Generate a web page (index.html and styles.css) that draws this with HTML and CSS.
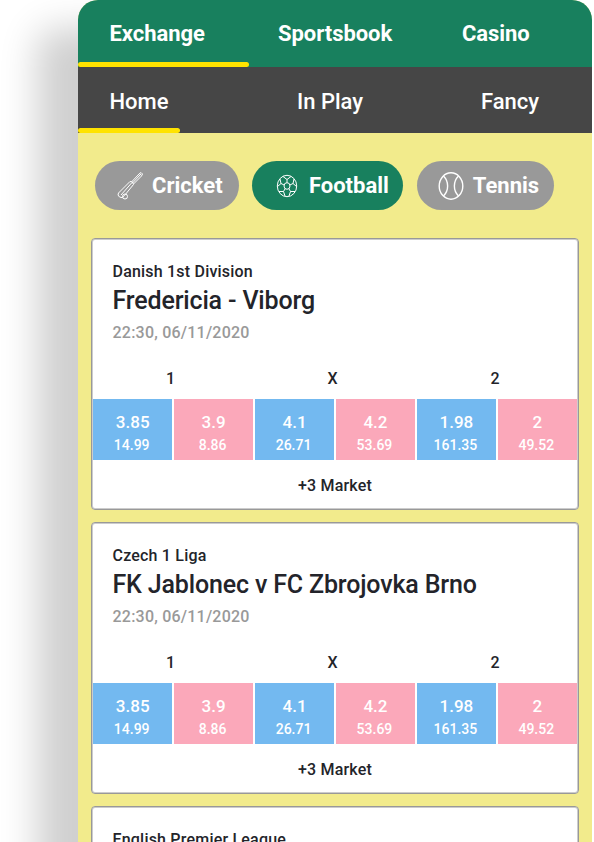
FILE: index.html
```html
<!DOCTYPE html>
<html lang="en">

<head>
    <meta charset="UTF-8">
    <meta name="viewport" content="width=device-width, initial-scale=1.0">
    <title>Exchange</title>
    <link rel="stylesheet" href="styles.css">
</head>

<body>
    <main class="phone">
        <nav class="tabs tabs-main">
            <a class="active">Exchange</a>
            <a>Sportsbook</a>
            <a>Casino</a>
        </nav>
        <nav class="tabs tabs-sub">
            <a class="active">Home</a>
            <a>In Play</a>
            <a>Fancy</a>
        </nav>

        <!-- Sports filter -->
        <div class="sports">
            <button class="sport cricket">
                <svg width="28" height="30" viewBox="0 0 28 30">
                    <path d="M2.500 22L14 10.500Q17 10 17.500 13.500L8.500 24.500Q6 28 3.500 26Q1 24 2.500 22Z M5 24L16 11.500 M15.500 11L23 3L25 1.500L26.500 3L25.500 5L17.500 13 M16.500 12L25 3" />
                    <circle cx="9" cy="25.500" r="2.500" />
                </svg>
                <span>Cricket</span>
            </button>
            <button class="sport football active">
                <svg width="22" height="24" viewBox="0 0 22 24">
                    <ellipse cx="11" cy="12" rx="9.700" ry="10.700" />
                    <ellipse cx="11" cy="12" rx="3" ry="3.300" />
                    <path d="M11 8.700V5.500L7 2.500 M11 5.500L15 2.500 M13.800 11L17 9.500L18 5 M17 9.500L20.500 12.500 M12.800 14.600L14.500 17.500L19 17.500 M14.500 17.500L13 22 M9.200 14.600L7.500 17.500L3 17.500 M7.500 17.500L9 22 M8.200 11L5 9.500L4 5 M5 9.500L1.500 12.500" />
                </svg>
                <span>Football</span>
            </button>
            <button class="sport tennis">
                <svg width="26" height="28" viewBox="0 0 26 28">
                    <ellipse cx="13" cy="14" rx="11.800" ry="13.200" />
                    <path d="M5.500 4C11 9.500 11 18.500 5.500 24 M20.500 4C15 9.500 15 18.500 20.500 24" />
                </svg>
                <span>Tennis</span>
            </button>
        </div>

        <!-- Matches -->
        <div class="matches">
            <section class="card">
                <h3 class="league">Danish 1st Division</h3>
                <h2 class="teams">Fredericia - Viborg</h2>
                <p class="date">22:30, 06/11/2020</p>
                <div class="outcomes"><span>1</span><span>X</span><span>2</span></div>
                <div class="odds">
                    <div class="back"><b>3.85</b><small>14.99</small></div>
                    <div class="lay"><b>3.9</b><small>8.86</small></div>
                    <div class="back"><b>4.1</b><small>26.71</small></div>
                    <div class="lay"><b>4.2</b><small>53.69</small></div>
                    <div class="back"><b>1.98</b><small>161.35</small></div>
                    <div class="lay"><b>2</b><small>49.52</small></div>
                </div>
                <a class="more">+3 Market</a>
            </section>

            <section class="card">
                <h3 class="league">Czech 1 Liga</h3>
                <h2 class="teams">FK Jablonec v FC Zbrojovka Brno</h2>
                <p class="date">22:30, 06/11/2020</p>
                <div class="outcomes"><span>1</span><span>X</span><span>2</span></div>
                <div class="odds">
                    <div class="back"><b>3.85</b><small>14.99</small></div>
                    <div class="lay"><b>3.9</b><small>8.86</small></div>
                    <div class="back"><b>4.1</b><small>26.71</small></div>
                    <div class="lay"><b>4.2</b><small>53.69</small></div>
                    <div class="back"><b>1.98</b><small>161.35</small></div>
                    <div class="lay"><b>2</b><small>49.52</small></div>
                </div>
                <a class="more">+3 Market</a>
            </section>

            <section class="card">
                <h3 class="league">English Premier League</h3>
            </section>
        </div>
    </main>
</body>

</html>
```
FILE: styles.css
```css
* {
    box-sizing: border-box;
}

body {
    margin: 0;
    height: 842px;
    overflow: hidden;
    background-color: #fff;
    font-family: Roboto, sans-serif;
    font-weight: 500;
    color: #23242a;
}

.phone {
    width: 514px;
    height: 900px;
    margin-left: 78px;
    border-radius: 20px 20px 0 0;
    background-color: #f2eb8c;
    box-shadow: -41px 28px 37px rgba(0, 0, 0, 0.19);
    overflow: hidden;
}

/* Navigation */
.tabs {
    display: grid;
    height: 67px;
    color: #fff;
    font-size: 22px;
    line-height: 67px;
}

.tabs a {
    white-space: nowrap;
}

.tabs .active {
    padding-left: 31.5px;
}

.tabs .active::after {
    content: "";
    display: block;
    height: 5px;
    margin: -5px 0 0 -31.5px;
    border-radius: 3px;
    background-color: #ffe300;
}

.tabs-main {
    grid-template-columns: 171px 184px 1fr;
    background-color: #18805e;
    font-weight: 700;
}

.tabs-main a:nth-child(2),
.tabs-main a:nth-child(3) {
    padding-left: 29px;
}

.tabs-main a {
    letter-spacing: -0.05px;
}

.tabs-sub {
    grid-template-columns: 102px 200px 1fr;
    height: 66px;
    background-color: #464646;
}

.tabs-sub a {
    padding-top: 1px;
}

.tabs-sub .active::after {
    margin-top: -7px;
}

.tabs-sub a:nth-child(2) {
    padding-left: 117px;
}

.tabs-sub a:nth-child(3) {
    padding-left: 101px;
}

/* Sports filter */
.sports {
    display: flex;
    gap: 13.4px;
    padding: 28px 17px;
}

.sport {
    display: flex;
    align-items: center;
    height: 49px;
    padding: 0 0 0 21px;
    border: 0;
    border-radius: 25px;
    background-color: #999;
    color: #fff;
    font: 700 22px Roboto, sans-serif;
}

.sport.active {
    background-color: #18805e;
}

.sport svg {
    fill: none;
    stroke: #fff;
    stroke-width: 1;
}

.cricket {
    width: 144px;
    gap: 8px;
}

.football {
    width: 151px;
    padding-left: 24px;
    gap: 10.5px;
}

.tennis {
    width: 137px;
    gap: 9px;
}

.sport.tennis svg {
    stroke-width: 1.4;
}

/* Matches */
.matches {
    display: flex;
    flex-direction: column;
    gap: 12px;
    padding: 0 13px;
}

.card {
    height: 272px;
    padding-top: 23px;
    border: 1px solid #999;
    border-radius: 4px;
    background-color: #fff;
    box-shadow: inset 0 0 0 1px #ccc;
}

.league,
.teams,
.date {
    margin: 0 0 0 20.5px;
    font-weight: 500;
}

.league {
    font-size: 16px;
    letter-spacing: 0.2px;
    line-height: 20px;
}

.teams {
    font-size: 25px;
    letter-spacing: -0.16px;
    line-height: 38px;
}

.date {
    color: #999;
    font-size: 16px;
    letter-spacing: 0.22px;
    line-height: 26px;
}

.outcomes {
    display: grid;
    grid-template-columns: 157px 167px 158px;
    padding-top: 22px;
    font-size: 16px;
    line-height: 22px;
    text-align: center;
}

.odds {
    display: grid;
    grid-template-columns: repeat(6, 1fr);
    gap: 1.5px;
    height: 61px;
    margin: 9px 1px 0;
}

.odds div {
    display: flex;
    flex-direction: column;
    align-items: center;
    padding-top: 12px;
    color: #fff;
}

.odds b {
    font-size: 17px;
    font-weight: 500;
    line-height: 23px;
}

.odds small {
    font-size: 14px;
    line-height: 22px;
    margin-left: -2px;
}

.back {
    background-color: #73b9f0;
}

.lay {
    background-color: #fba8ba;
}

.more {
    display: block;
    font-size: 16px;
    letter-spacing: 0.2px;
    line-height: 52px;
    text-align: center;
}
```
